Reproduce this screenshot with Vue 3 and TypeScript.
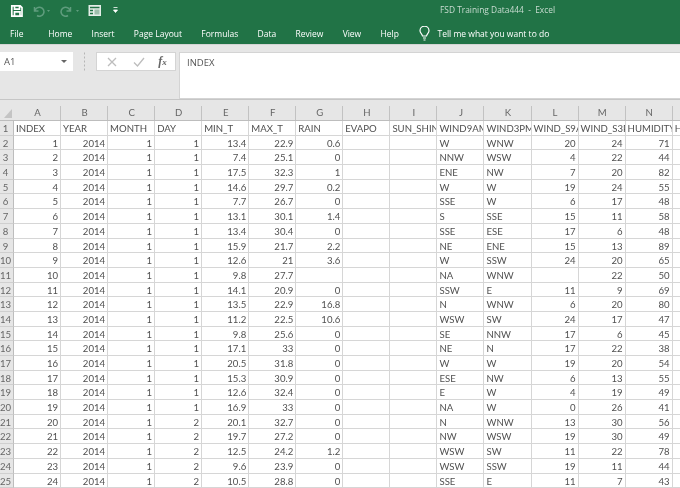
<script setup lang="ts">
const tabs = ['File', 'Home', 'Insert', 'Page Layout', 'Formulas', 'Data', 'Review', 'View', 'Help']
const columns = 'ABCDEFGHIJKLMNO'.split('')
const headers = ['INDEX', 'YEAR', 'MONTH', 'DAY', 'MIN_T', 'MAX_T', 'RAIN', 'EVAPO', 'SUN_SHINE', 'WIND9AM', 'WIND3PM', 'WIND_S9AM', 'WIND_S3PM', 'HUMIDITY', 'HUMIDITY']

// min, max, rain, wind 9am, wind 3pm, speed 9am, speed 3pm, humidity
const weather: [number, number, number | '', string, string, number | '', number, number][] = [
  [13.4, 22.9, 0.6, 'W', 'WNW', 20, 24, 71],
  [7.4, 25.1, 0, 'NNW', 'WSW', 4, 22, 44],
  [17.5, 32.3, 1, 'ENE', 'NW', 7, 20, 82],
  [14.6, 29.7, 0.2, 'W', 'W', 19, 24, 55],
  [7.7, 26.7, 0, 'SSE', 'W', 6, 17, 48],
  [13.1, 30.1, 1.4, 'S', 'SSE', 15, 11, 58],
  [13.4, 30.4, 0, 'SSE', 'ESE', 17, 6, 48],
  [15.9, 21.7, 2.2, 'NE', 'ENE', 15, 13, 89],
  [12.6, 21, 3.6, 'W', 'SSW', 24, 20, 65],
  [9.8, 27.7, '', 'NA', 'WNW', '', 22, 50],
  [14.1, 20.9, 0, 'SSW', 'E', 11, 9, 69],
  [13.5, 22.9, 16.8, 'N', 'WNW', 6, 20, 80],
  [11.2, 22.5, 10.6, 'WSW', 'SW', 24, 17, 47],
  [9.8, 25.6, 0, 'SE', 'NNW', 17, 6, 45],
  [17.1, 33, 0, 'NE', 'N', 17, 22, 38],
  [20.5, 31.8, 0, 'W', 'W', 19, 20, 54],
  [15.3, 30.9, 0, 'ESE', 'NW', 6, 13, 55],
  [12.6, 32.4, 0, 'E', 'W', 4, 19, 49],
  [16.9, 33, 0, 'NA', 'W', 0, 26, 41],
  [20.1, 32.7, 0, 'N', 'WNW', 13, 30, 56],
  [19.7, 27.2, 0, 'NW', 'WSW', 19, 30, 49],
  [12.5, 24.2, 1.2, 'WSW', 'SW', 11, 22, 78],
  [9.6, 23.9, 0, 'WSW', 'SSW', 19, 11, 44],
  [10.5, 28.8, 0, 'SSE', 'E', 11, 7, 43],
]

const rows = weather.map((w, i) => [
  i + 1, 2014, 1, i < 19 ? 1 : 2, w[0], w[1], w[2], '', '', w[3], w[4], w[5], w[6], w[7], '',
])
</script>

<template>
  <div class="excel">
    <div class="titlebar">
      <svg class="qat" width="130" height="22" viewBox="0 0 130 22">
        <path d="M11.800 5.800h8.400l1.800 1.800v8.600H11.800z M14.500 5.800v3.400h5V5.800 M14.500 16.200v-4.400h5.500v4.400" fill="none" stroke="#fff" stroke-width="1.700" />
        <path d="M35 11a4.500 4.500 0 1 1 2 4.500 M34.500 7v4h4" fill="none" stroke="#5f9c7d" stroke-width="1.500" />
        <path d="M47 10h3l-1.500 2z M76 10h3l-1.500 2z" fill="#5f9c7d" />
        <path d="M70 11a4.500 4.500 0 1 0-2 4.500 M70.500 7v4h-4" fill="none" stroke="#5f9c7d" stroke-width="1.500" />
        <rect x="88.500" y="5" width="12.500" height="11" fill="#e4eee8" />
        <path d="M90 7.500h9.500 M90 10.500h3 M90 13.500h3" stroke="#217346" stroke-width="1.300" />
        <rect x="94.500" y="9.500" width="5" height="5" fill="#9dbfac" />
        <path d="M113.500 7.500h4 M113.500 10h4l-2 2.500z" stroke="#fff" stroke-width="0.800" fill="#fff" />
      </svg>
      <span class="doc-title">FSD Training Data444 &nbsp;-&nbsp; Excel</span>
    </div>

    <div class="ribbon-tabs">
      <span v-for="tab in tabs" :key="tab" class="tab">{{ tab }}</span>
      <svg class="bulb" width="11" height="15" viewBox="0 0 11 15">
        <path d="M3.500 10C3.200 8 1 7 1 4.700a4.500 4.500 0 0 1 9 0C10 7 7.800 8 7.500 10z M4 12h3 M4.500 14h2" fill="none" stroke="#fff" stroke-width="1.200" />
      </svg>
      <span class="tell">Tell me what you want to do</span>
    </div>

    <div class="formula-area">
      <div class="name-box">
        <span>A1</span>
        <i class="caret"></i>
      </div>
      <div class="grip"></div>
      <div class="fx-box">
        <svg width="14" height="14" viewBox="0 0 14 14"><path d="M3 3l8 8M11 3l-8 8" stroke="#bdbdbd" stroke-width="1.300" /></svg>
        <svg width="14" height="14" viewBox="0 0 14 14"><path d="M2 7.500l3.500 3.500 6.500-8" fill="none" stroke="#bdbdbd" stroke-width="1.300" /></svg>
        <span class="fx">f<small>x</small></span>
      </div>
      <div class="formula-input">INDEX</div>
    </div>

    <div class="sheet">
      <div class="corner"><i></i></div>
      <div v-for="col in columns" :key="col" class="col-head">{{ col }}</div>

      <div class="row-head">1</div>
      <div v-for="(head, c) in headers" :key="c" class="cell text">{{ head }}</div>

      <template v-for="(row, r) in rows" :key="r">
        <div class="row-head">{{ r + 2 }}</div>
        <div
          v-for="(value, c) in row"
          :key="c"
          class="cell"
          :class="{ text: typeof value === 'string' }"
        >{{ value }}</div>
      </template>
    </div>
  </div>
</template>

<style scoped>
.excel {
  width: 680px;
  height: 488px;
  overflow: hidden;
  background: #e6e6e6;
  font-family: "Open Sans", "Noto Sans", sans-serif;
  filter: blur(0.4px);
}

.titlebar {
  position: relative;
  height: 22px;
  background: #217346;
  display: flex;
  align-items: center;
}

.qat {
  display: block;
}

.doc-title {
  position: absolute;
  left: 440px;
  top: 4px;
  font-size: 8.400px;
  line-height: 12px;
  color: #c9dcd1;
}

.ribbon-tabs {
  height: 22px;
  background: #217346;
  display: flex;
  align-items: center;
  gap: 19.300px;
  padding-left: 10px;
  color: #fff;
  font-size: 8.500px;
}

.tab:first-child {
  margin-right: 5.500px;
}

.bulb {
  margin-left: 1px;
  margin-right: -12px;
}

.formula-area {
  height: 55px;
  display: flex;
  align-items: flex-start;
  padding-top: 7px;
  box-sizing: border-box;
  border-top: 1px solid #d4d4d4;
}

.name-box {
  width: 73px;
  height: 19px;
  background: #fff;
  display: flex;
  align-items: center;
  justify-content: space-between;
  padding: 0 6px 0 4px;
  box-sizing: border-box;
  font-size: 9.500px;
  color: #555;
}

.caret {
  border-left: 3px solid transparent;
  border-right: 3px solid transparent;
  border-top: 3px solid #666;
}

.grip {
  width: 23px;
  height: 19px;
  background: radial-gradient(circle, #b5b5b5 1px, transparent 1px) center / 3px 4px repeat-y;
}

.fx-box {
  width: 80px;
  height: 19px;
  background: #fff;
  border: 1px solid #d4d4d4;
  display: flex;
  align-items: center;
  justify-content: space-around;
  padding: 0 2px;
  box-sizing: border-box;
}

.fx {
  font-family: "Liberation Serif", serif;
  font-style: italic;
  font-weight: bold;
  font-size: 12px;
  color: #666;
}

.fx small {
  font-size: 9px;
}

.formula-input {
  width: 501px;
  height: 47px;
  margin-left: 3px;
  background: #fff;
  border: 1px solid #d4d4d4;
  border-right: 0;
  padding: 2px 7px;
  box-sizing: border-box;
  font-size: 9.500px;
  line-height: 15px;
  color: #555;
}

.sheet {
  display: grid;
  grid-template-columns: 14px repeat(15, 47.050px);
  grid-template-rows: 21px;
  grid-auto-rows: 14.700px;
  background: #fff;
  border-top: 1px solid #c6c6c6;
  font-family: Lato, "Open Sans", sans-serif;
  font-size: 9.600px;
  color: #505050;
}

.corner {
  position: relative;
  background: #e6e6e6;
  border-bottom: 1px solid #bdbdbd;
  box-sizing: border-box;
}

.corner i {
  position: absolute;
  right: 2px;
  bottom: 2px;
  border-left: 8px solid transparent;
  border-bottom: 9px solid #c4c4c4;
}

.col-head {
  background: #e6e6e6 linear-gradient(#c2c2c2, #c2c2c2) right bottom / 1px 14px no-repeat;
  border-bottom: 1px solid #bdbdbd;
  box-sizing: border-box;
  display: flex;
  align-items: flex-end;
  justify-content: center;
  line-height: 14px;
  color: #666;
}

.row-head {
  background: #e6e6e6;
  border-right: 1px solid #bdbdbd;
  border-bottom: 1px solid #cfcfcf;
  box-sizing: border-box;
  padding-right: 2px;
  text-align: center;
  line-height: 15.500px;
  color: #666;
  font-size: 9.600px;
  white-space: nowrap;
  overflow: hidden;
}

.cell {
  border-right: 1px solid #d6d6d6;
  border-bottom: 1px solid #d6d6d6;
  box-sizing: border-box;
  padding: 0 2px;
  line-height: 15.500px;
  text-align: right;
  white-space: nowrap;
  overflow: hidden;
}

.cell.text {
  text-align: left;
}
</style>
